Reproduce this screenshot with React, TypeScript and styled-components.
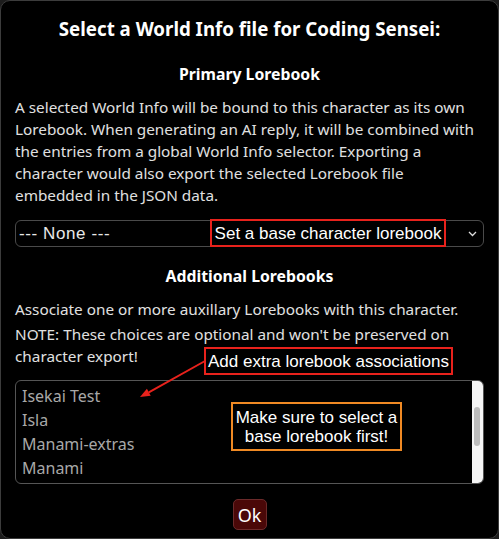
import React from "react";
import styled, { createGlobalStyle } from "styled-components";

const Global = createGlobalStyle`
  html, body { margin: 0; padding: 0; background: #1c1c1c; }
  body { font-family: "Noto Sans", "Open Sans", sans-serif; }
  * { box-sizing: border-box; }
`;

const Dialog = styled.div`
  width: 499px;
  height: 539px;
  background: #000;
  border: 1px solid #3c3c3c;
  border-radius: 10px;
  padding: 0 14px;
  display: flex;
  flex-direction: column;
  color: #e6e6e6;
  font-family: "Noto Sans", sans-serif;
`;

const Title = styled.h2`
  margin: 15px 0 0;
  font-size: 18.7px;
  line-height: 26px;
  font-weight: 700;
  text-align: center;
  color: #fff;
`;

const Heading = styled.h3<{ $top: number }>`
  margin: ${(p) => p.$top}px 0 0;
  font-size: 15.8px;
  line-height: 22px;
  font-weight: 700;
  text-align: center;
  color: #fff;
`;

const Para = styled.p<{ $top: number }>`
  margin: ${(p) => p.$top}px 0 0;
  font-size: 15.3px;
  line-height: 22px;
  color: #e0e0e0;
`;

const Anchor = styled.div<{ $top: number }>`
  position: relative;
  margin-top: ${(p) => p.$top}px;
`;

const SelectBox = styled.div`
  height: 27px;
  border: 1px solid #4a4a4a;
  border-radius: 6px;
  display: flex;
  align-items: center;
  justify-content: space-between;
  padding: 0 6px 0 3px;
  font-family: "Liberation Sans", Arial, sans-serif;
  font-size: 17px;
  letter-spacing: 0.6px;
  color: #e8e8e8;
`;

const Note = styled.div<{ $color: string; $x: number; $y: number; $w: number; $h: number }>`
  position: absolute;
  left: ${(p) => p.$x}px;
  top: ${(p) => p.$y}px;
  width: ${(p) => p.$w}px;
  height: ${(p) => p.$h}px;
  border: 2px solid ${(p) => p.$color};
  background: #000;
  color: #fff;
  font-family: "Liberation Sans", Arial, sans-serif;
  font-size: 17px;
  line-height: 19px;
  display: flex;
  align-items: center;
  justify-content: center;
  text-align: center;
  white-space: nowrap;
`;

const ArrowSvg = styled.svg`
  position: absolute;
  left: 0;
  top: 0;
  overflow: visible;
  pointer-events: none;
`;

const ListBox = styled.div`
  height: 104px;
  border: 1px solid #555;
  border-radius: 6px;
  display: flex;
  overflow: hidden;
`;

const Items = styled.div`
  flex: 1;
  padding: 3px 6px;
  display: flex;
  flex-direction: column;
`;

const Item = styled.div`
  font-size: 16px;
  line-height: 24px;
  color: #a8a8a8;
`;

const Track = styled.div`
  width: 11px;
  background: #f6f6f6;
  padding: 26px 2px 0;
`;

const Thumb = styled.div`
  width: 6px;
  height: 39px;
  border-radius: 3px;
  background: #bdbdbd;
`;

const Footer = styled.div`
  display: flex;
  justify-content: center;
  margin-top: 15px;
`;

const OkButton = styled.button`
  width: 34px;
  height: 31px;
  padding: 0;
  border: 1px solid #6b2a2a;
  border-radius: 5px;
  background: #4a0808;
  color: #fff;
  font-family: "Noto Sans", sans-serif;
  font-size: 18px;
`;

export default function App() {
  return (
    <>
      <Global />
      <Dialog>
        <Title>Select a World Info file for Coding Sensei:</Title>
        <Heading $top={21}>Primary Lorebook</Heading>
        <Para $top={11}>
          A selected World Info will be bound to this character as its own Lorebook. When
          generating an AI reply, it will be combined with the entries from a global World Info
          selector. Exporting a character would also export the selected Lorebook file embedded
          in the JSON data.
        </Para>
        <Anchor $top={14}>
          <SelectBox>
            <span>--- None ---</span>
            <svg width="9" height="6" viewBox="0 0 9 6">
              <path d="M1 1 L4.5 4.5 L8 1" fill="none" stroke="#ddd" strokeWidth="1.3" />
            </svg>
          </SelectBox>
          <Note $color="#e8221c" $x={195} $y={-1} $w={236} $h={28}>
            Set a base character lorebook
          </Note>
        </Anchor>
        <Heading $top={18}>Additional Lorebooks</Heading>
        <Para $top={11}>Associate one or more auxillary Lorebooks with this character.</Para>
        <Para $top={3}>
          NOTE: These choices are optional and won't be preserved on character export!
        </Para>
        <Anchor $top={13}>
          <ListBox>
            <Items>
              <Item>Isekai Test</Item>
              <Item>Isla</Item>
              <Item>Manami-extras</Item>
              <Item>Manami</Item>
            </Items>
            <Track>
              <Thumb />
            </Track>
          </ListBox>
          <Note $color="#e8221c" $x={189} $y={-33} $w={249} $h={28}>
            Add extra lorebook associations
          </Note>
          <Note $color="#f08a24" $x={216} $y={22} $w={171} $h={49}>
            Make sure to select a
            <br />
            base lorebook first!
          </Note>
          <ArrowSvg width="1" height="1">
            <line x1="190" y1="-19" x2="133.8" y2="12.3" stroke="#e8221c" strokeWidth="2" />
            <polygon points="125,17 135.7,15.8 131.9,8.8" fill="#e8221c" />
          </ArrowSvg>
        </Anchor>
        <Footer>
          <OkButton>Ok</OkButton>
        </Footer>
      </Dialog>
    </>
  );
}
